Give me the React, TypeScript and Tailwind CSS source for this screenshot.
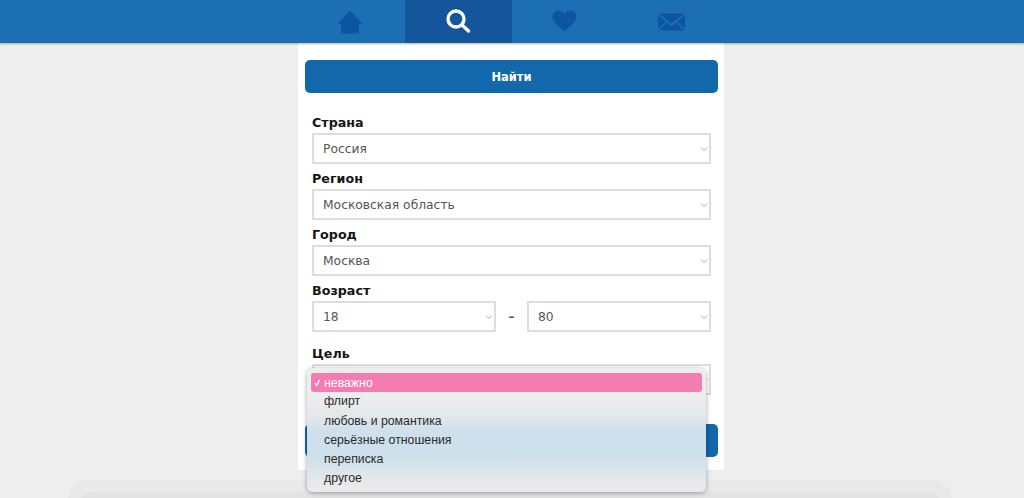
function Chevron() {
  return (
    <svg width="8" height="6" viewBox="0 0 8 6" className="shrink-0" fill="none" stroke="#a8a8a8" strokeWidth="1">
      <path d="M1 1.5 L4 4.5 L7 1.5" />
    </svg>
  );
}

function SelectBox({ value, className }: { value: string; className?: string }) {
  return (
    <div className={`h-[31px] border-2 border-[#dddddd] bg-white flex items-center justify-between pl-[9px] pr-[1px] text-[12.3px] text-[#555] ${className ?? ""}`}>
      <span className="pt-[1px]">{value}</span>
      <Chevron />
    </div>
  );
}

function Label({ text }: { text: string }) {
  return <div className="h-[25px] text-[12.7px] font-bold text-[#151515] flex items-center pt-[6px] leading-none">{text}</div>;
}

function Field({ label, value }: { label: string; value: string }) {
  return (
    <div className="h-[56px]">
      <Label text={label} />
      <SelectBox value={value} />
    </div>
  );
}

const options = ["флирт", "любовь и романтика", "серьёзные отношения", "переписка", "другое"];

export default function App() {
  return (
    <div className="relative w-[1024px] h-[498px] overflow-hidden bg-[#eeeeee] font-['DejaVu_Sans',sans-serif]">
      <header className="h-[43px] bg-[#1c6fb3] shadow-[0_1px_2px_rgba(0,0,0,0.3)] relative z-10">
        <nav className="ml-[298px] w-[427px] flex h-full">
          <div className="flex-1 flex items-center justify-center">
            <svg width="26" height="24" viewBox="0 0 26 24" fill="#0b55a3" className="-ml-[2px]">
              <path d="M13 0.5 L25.5 14 L22 14 L22 23.5 L4 23.5 L4 14 L0.5 14 Z" />
            </svg>
          </div>
          <div className="flex-1 flex items-center justify-center bg-[#14559c]">
            <svg width="26" height="26" viewBox="0 0 26 26" fill="none" stroke="#fff" strokeWidth="3.4" strokeLinecap="round" className="-ml-[1px] -mt-[1px]">
              <circle cx="11" cy="11" r="8" />
              <path d="M17 17 L23.5 23" />
            </svg>
          </div>
          <div className="flex-1 flex items-center justify-center">
            <svg width="25" height="22" viewBox="0 0 25 22" fill="#0b55a3" className="-mt-[1px]">
              <path d="M12.5 21.5 C8 17 0.5 12.5 0.5 6.5 C0.5 3 3 0.5 6.5 0.5 C9 0.5 11.3 1.8 12.5 4 C13.7 1.8 16 0.5 18.5 0.5 C22 0.5 24.5 3 24.5 6.5 C24.5 12.5 17 17 12.5 21.5 Z" />
            </svg>
          </div>
          <div className="flex-1 flex items-center justify-center">
            <svg width="27" height="18" viewBox="0 0 27 18" fill="#0b55a3">
              <path d="M0.5 0.5 H26.5 L13.5 10.5 Z" />
              <path d="M0 2 L8 8.5 L0 16 Z" />
              <path d="M27 2 L19 8.5 L27 16 Z" />
              <path d="M0.5 17.5 L9 9.5 L13.5 13 L18 9.5 L26.5 17.5 Z" />
            </svg>
          </div>
        </nav>
      </header>

      <main className="ml-[298px] w-[426px] h-[427px] bg-white pl-[7px] pr-[6px] pt-[17px] relative">
        <button className="w-full h-[33px] rounded-[5px] bg-[#1368ab] text-white text-[11.5px] font-bold flex items-center justify-center pt-[2px]">Найти</button>
        <div className="px-[7px] pt-[15px]">
          <Field label="Страна" value="Россия" />
          <Field label="Регион" value="Московская область" />
          <Field label="Город" value="Москва" />
          <div className="h-[63px]">
            <Label text="Возраст" />
            <div className="flex items-center">
              <SelectBox value="18" className="w-[184px]" />
              <div className="flex-1 text-center text-[12px] text-[#555] font-bold">–</div>
              <SelectBox value="80" className="w-[184px]" />
            </div>
          </div>
          <Label text="Цель" />
          <SelectBox value="неважно" />
        </div>
        <button className="mt-[29px] w-full h-[33px] rounded-[5px] bg-[#1368ab] block"></button>
      </main>

      <div className="absolute left-[68px] w-[884px] top-[480px] h-[40px] rounded-t-[20px] bg-[#e9e9e9]">
        <div className="mx-[10px] mt-[12px] h-[30px] rounded-t-[14px] bg-[#e3e3e3]"></div>
      </div>

      <div className="absolute left-[307px] top-[368px] w-[399px] h-[124px] rounded-[6px] bg-[linear-gradient(180deg,#ededed_25%,#e3e8ea_38%,#cde0eb_52%,#cde0eb_72%,#e2e8ea_88%,#ebebeb_100%)] shadow-[0_1px_5px_rgba(0,0,0,0.35)] px-[4px] pt-[5px] font-['Liberation_Sans',sans-serif] text-[12.3px] text-[#2b2b2b] z-20">
        <div className="h-[19px] rounded-[3px] bg-[#f47cb1] text-white flex items-center">
          <svg width="13" height="10" viewBox="0 0 13 10" fill="none" stroke="#fff" strokeWidth="1.4" className="shrink-0">
            <path d="M4 5 L5.7 7.5 L8.5 2" />
          </svg>
          <span className="pt-[1px]">неважно</span>
        </div>
        {options.map((o) => (
          <div key={o} className="h-[19.2px] pl-[13px] flex items-center">{o}</div>
        ))}
      </div>
    </div>
  );
}
